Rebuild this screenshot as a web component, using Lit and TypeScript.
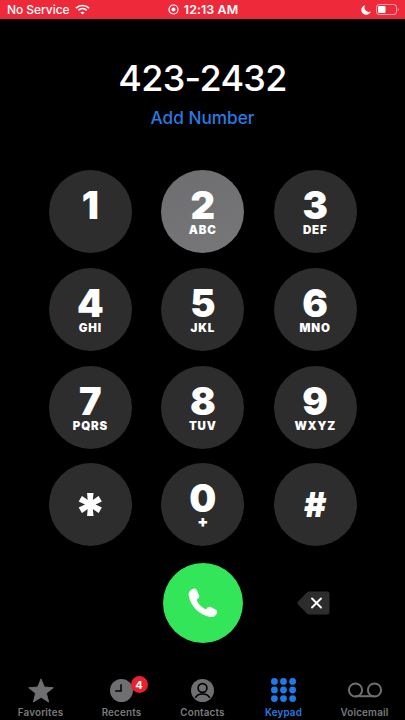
import { LitElement, html, css, svg } from "lit";
import { customElement } from "lit/decorators.js";

const KEYS = [
  ["1", ""], ["2", "ABC"], ["3", "DEF"],
  ["4", "GHI"], ["5", "JKL"], ["6", "MNO"],
  ["7", "PQRS"], ["8", "TUV"], ["9", "WXYZ"],
  ["*", ""], ["0", "+"], ["#", ""],
];

const star = svg`<svg width="26" height="25" viewBox="0 0 28 26"><path d="M14 0.5 L17.6 9.3 L27.2 10 L19.8 16 L22.2 25.4 L14 20.3 L5.8 25.4 L8.2 16 L0.8 10 L10.4 9.3 Z" fill="#6f6f71" stroke="#6f6f71" stroke-width="1" stroke-linejoin="round"/></svg>`;
const clock = svg`<svg width="23" height="23" viewBox="0 0 24 24"><circle cx="12" cy="12" r="12" fill="#6f6f71"/><path d="M11.5 5.5V12.6H5.5" fill="none" stroke="#000" stroke-width="1.6"/></svg>`;
const contact = svg`<svg width="23" height="23" viewBox="0 0 24 24"><circle cx="12" cy="12" r="12" fill="#6f6f71"/><circle cx="12" cy="9.4" r="4.6" fill="none" stroke="#000" stroke-width="1.7"/><path d="M4.4 19.6C6 16.6 8.8 15.6 12 15.6C15.2 15.6 18 16.6 19.6 19.6" fill="none" stroke="#000" stroke-width="1.7"/></svg>`;
const keypad = svg`<svg width="25" height="24" viewBox="0 0 25 24" fill="#1f7ae8">${[3.4, 12.5, 21.6].flatMap((x) => [3.4, 12, 20.6].map((y) => svg`<circle cx=${x} cy=${y} r="3.4"/>`))}</svg>`;
const voicemail = svg`<svg width="36" height="16" viewBox="0 0 36 16"><path d="M8.5 14.2H27.5" stroke="#6f6f71" stroke-width="2"/><circle cx="8.5" cy="8" r="6.6" fill="none" stroke="#6f6f71" stroke-width="2"/><circle cx="27.5" cy="8" r="6.6" fill="none" stroke="#6f6f71" stroke-width="2"/></svg>`;

@customElement("app-root")
export class AppRoot extends LitElement {
  static styles = css`
    :host { display: block; width: 405px; height: 720px; background: #000; color: #fff; overflow: hidden; font-family: Inter, "Liberation Sans", sans-serif; }
    .page { display: flex; flex-direction: column; height: 720px; }
    .status { height: 19px; background: #ee2a3a; display: grid; grid-template-columns: 1fr auto 1fr; align-items: center; padding: 0 6px 0 7px; font-size: 12px; font-weight: 500; flex: none; box-sizing: border-box; }
    .left { display: flex; align-items: center; gap: 5px; letter-spacing: -0.05px; }
    .center { display: flex; align-items: center; gap: 5px; font-size: 12.4px; font-weight: 600; letter-spacing: 0.1px; }
    .right { display: flex; justify-content: flex-end; align-items: center; gap: 5px; }
    .number { text-align: center; font-size: 36px; font-weight: 500; line-height: 44px; margin-top: 37px; letter-spacing: -0.7px; }
    .add { text-align: center; color: #2a7ae2; font-size: 17.2px; font-weight: 500; line-height: 22px; margin-top: 7px; }
    .grid { display: grid; grid-template-columns: repeat(3, 83px); column-gap: 29.4px; row-gap: 14.8px; padding-left: 48.9px; margin-top: 41px; }
    .key { width: 83px; height: 83px; border-radius: 50%; background: #2d2d2e; display: flex; flex-direction: column; align-items: center; justify-content: flex-start; box-sizing: border-box; padding-top: 16px; }
    .key.on { background: linear-gradient(160deg, #6e6e70, #77777a); }
    .digit { font-size: 38px; font-weight: 900; line-height: 38px; height: 38px; }
    .digit.ast { font-size: 56px; line-height: 56px; height: 56px; padding-top: 7px; }
    .digit.hash { font-size: 34px; line-height: 34px; height: 34px; padding-top: 9px; }
    .letters { font-size: 11.5px; font-weight: 900; letter-spacing: 0.8px; line-height: 13px; margin-top: 0; }
    .letters.plus { font-size: 16px; line-height: 12px; margin-top: -2px; letter-spacing: 0; }
    .actions { display: grid; grid-template-columns: repeat(3, 83px); column-gap: 29.4px; padding-left: 48.9px; margin-top: 17px; align-items: center; }
    .call { grid-column: 2; justify-self: center; width: 80px; height: 80px; border-radius: 50%; background: #33e558; display: flex; align-items: center; justify-content: center; }
    .back { justify-self: center; display: flex; margin-left: -3px; }
    .tabs { margin-top: auto; display: grid; grid-template-columns: repeat(5, 81px); height: 43px; padding-top: 1px; flex: none; }
    .tab { display: flex; flex-direction: column; align-items: center; color: #7b7b7d; font-size: 9.8px; font-weight: 600; letter-spacing: 0.2px; position: relative; }
    .tab.active { color: #2a7ae2; }
    .ic { height: 26px; display: flex; align-items: center; justify-content: center; }
    .lbl { line-height: 12px; margin-top: 4px; }
    .badge { position: absolute; top: -1px; left: 50%; margin-left: 9px; width: 17px; height: 17px; border-radius: 50%; background: #e8232f; color: #fff; font-size: 11px; font-weight: 700; display: flex; align-items: center; justify-content: center; }
  `;

  render() {
    const tabs = [
      ["Favorites", star, false],
      ["Recents", clock, false],
      ["Contacts", contact, false],
      ["Keypad", keypad, true],
      ["Voicemail", voicemail, false],
    ] as const;
    return html`<div class="page">
      <div class="status">
        <div class="left">No Service
          <svg width="15" height="11" viewBox="0 0 15 11" fill="none" stroke="#fff" stroke-width="1.7"><path d="M1 4.2C4.6 .6 10.4 .6 14 4.2"/><path d="M3.3 6.4C5.7 4.1 9.3 4.1 11.7 6.4"/><path d="M7.5 10.6L5.4 8.4C6.6 7.4 8.4 7.4 9.6 8.4Z" fill="#fff" stroke="none"/></svg>
        </div>
        <div class="center">
          <svg width="11" height="11" viewBox="0 0 11 11"><circle cx="5.5" cy="5.5" r="4.5" fill="none" stroke="#fff" stroke-width="1.2"/><circle cx="5.5" cy="5.5" r="2" fill="#fff"/></svg>
          12:13 AM
        </div>
        <div class="right">
          <svg width="10" height="10" viewBox="0 0 10 10"><path d="M4 .3A4.8 4.8 0 1 0 9.7 6.4A4.4 4.4 0 0 1 4 .3Z" fill="#fff"/></svg>
          <svg width="23" height="11" viewBox="0 0 23 11"><rect x=".5" y=".5" width="20" height="10" rx="2.6" fill="none" stroke="#fff" stroke-opacity=".55"/><rect x="2" y="2" width="7.5" height="7" rx="1.2" fill="#fff"/><path d="M21.8 4v3c.7-.2 1-.8 1-1.5s-.3-1.3-1-1.5Z" fill="#fff" fill-opacity=".55"/></svg>
        </div>
      </div>
      <div class="number">423-2432</div>
      <div class="add">Add Number</div>
      <div class="grid">
        ${KEYS.map(([d, l]) => html`<div class="key ${d === "2" ? "on" : ""}">
          <div class="digit ${d === "*" ? "ast" : d === "#" ? "hash" : ""}">${d}</div>
          ${l ? html`<div class="letters ${l === "+" ? "plus" : ""}">${l}</div>` : ""}
        </div>`)}
      </div>
      <div class="actions">
        <div class="call">
          <svg width="30" height="30" viewBox="0 0 30 30"><path d="M5.2 .8C6.8 .2 8 .8 8.8 2.3L11 7C11.6 8.3 11.3 9.6 10.2 10.5L8.6 11.8C9.8 15.4 13.6 19.6 17.8 21.4L19.5 19.6C20.4 18.6 21.6 18.4 22.8 19L27.8 21.8C29.2 22.6 29.6 24 28.8 25.4C27.4 28 25 29.4 22.4 29C11 27.4 2 17 .6 7C.3 4.4 2.4 1.8 5.2 .8Z" fill="#fff"/></svg>
        </div>
        <div class="back">
          <svg width="33" height="24" viewBox="0 0 33 24"><path d="M11 .5H30C31.6.5 32.5 1.4 32.5 3V21C32.5 22.6 31.6 23.5 30 23.5H11L1 13.5C.2 12.6.2 11.4 1 10.5Z" fill="#2d2d2e"/><path d="M15 7.5L24 16.5M24 7.5L15 16.5" stroke="#fff" stroke-width="1.9" stroke-linecap="round"/></svg>
        </div>
      </div>
      <div class="tabs">
        ${tabs.map(([n, ic, a]) => html`<div class="tab ${a ? "active" : ""}">
          <div class="ic">${ic}</div>
          <div class="lbl">${n}</div>
          ${n === "Recents" ? html`<div class="badge">4</div>` : ""}
        </div>`)}
      </div>
    </div>`;
  }
}
